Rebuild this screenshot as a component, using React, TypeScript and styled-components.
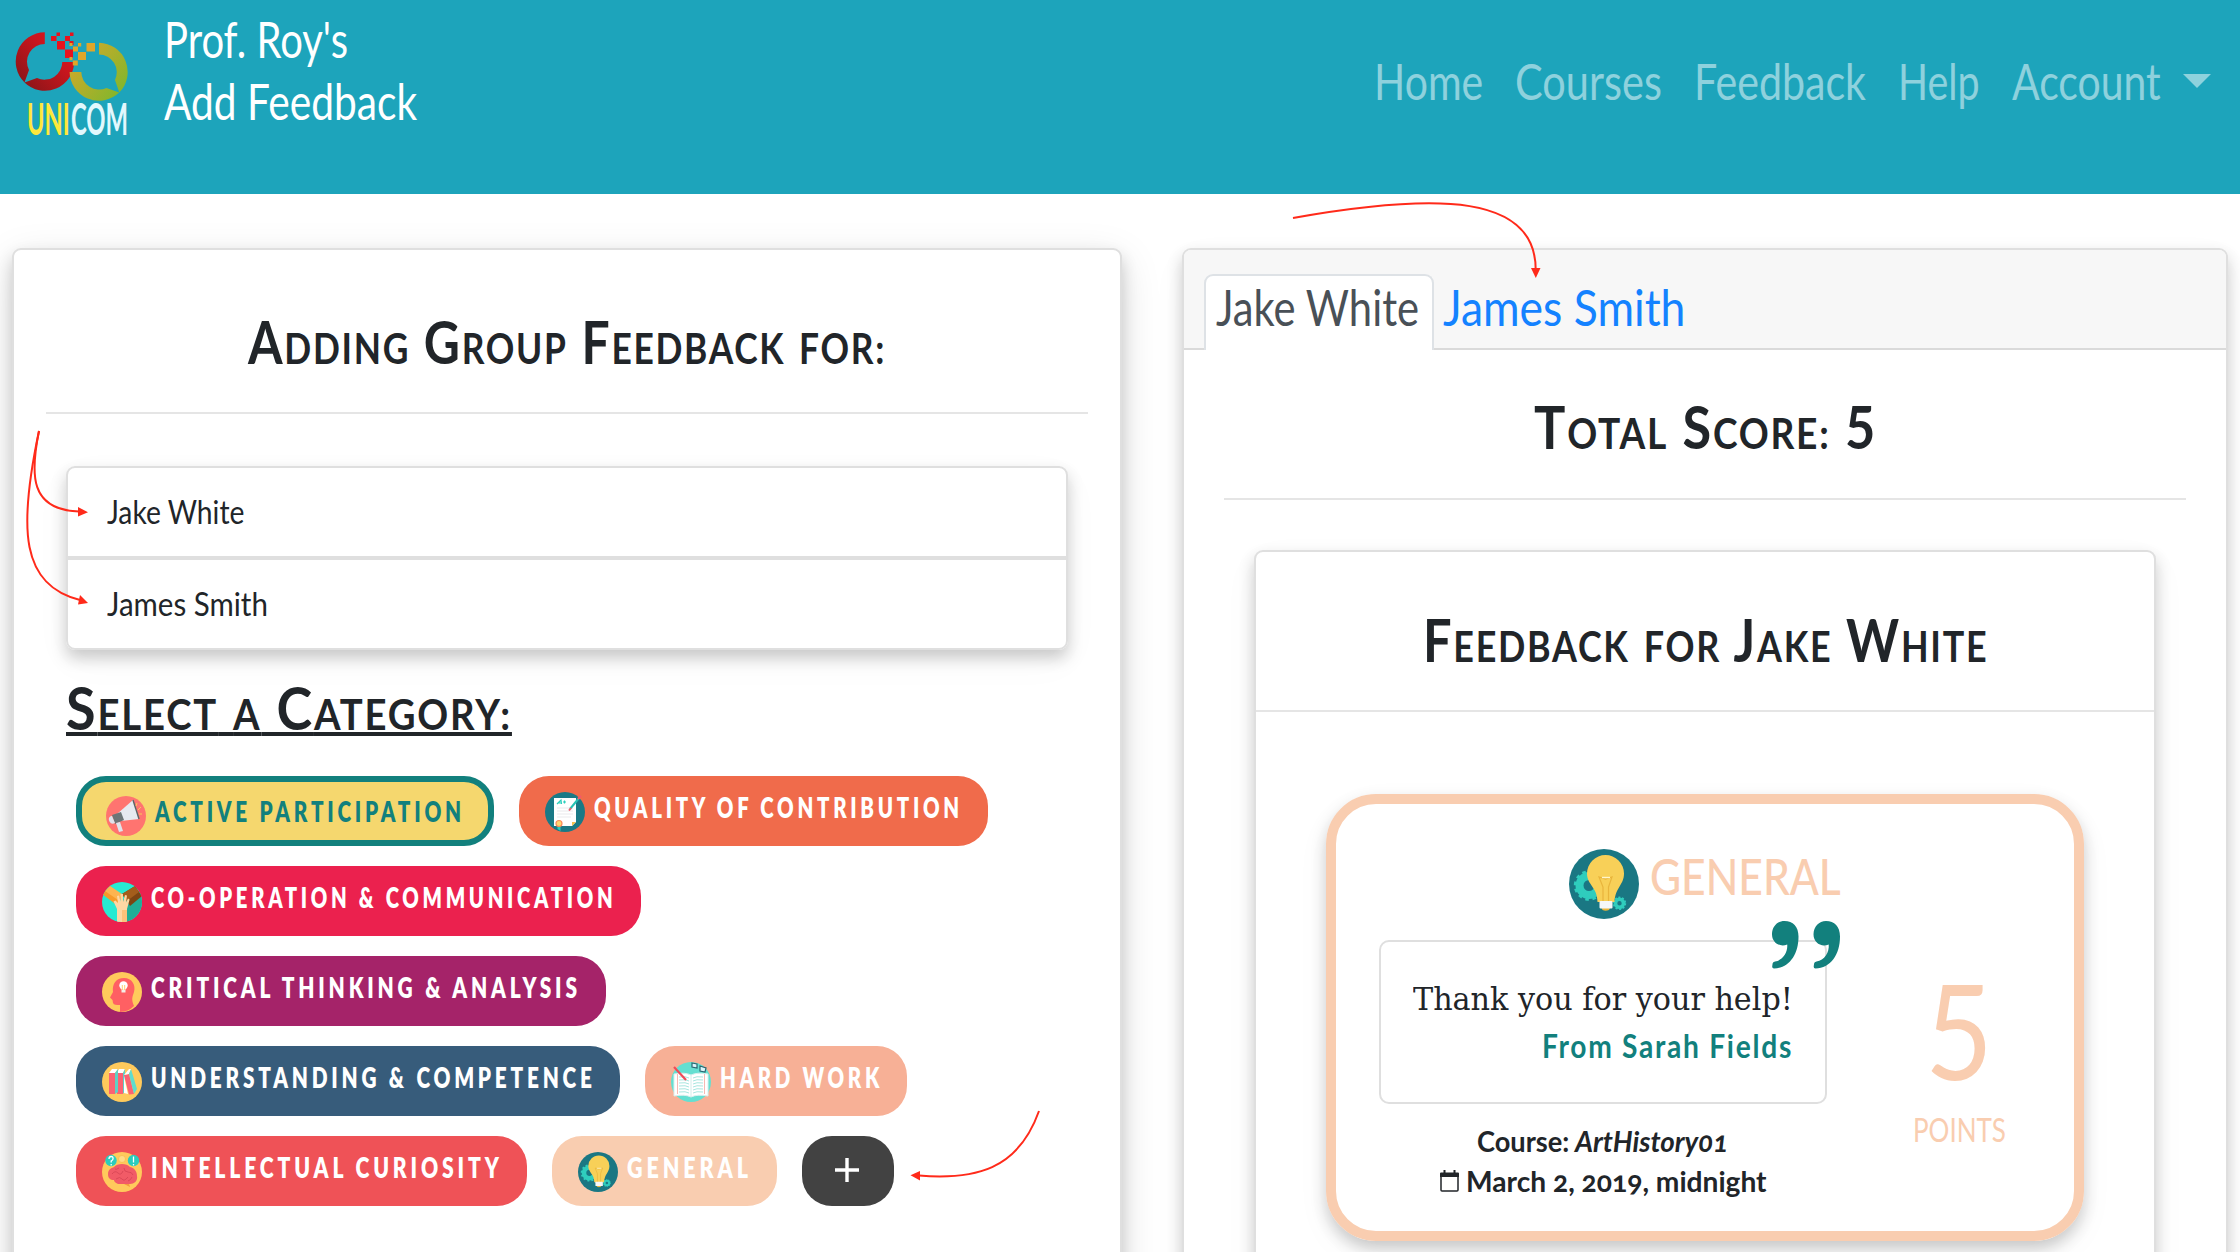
import React, { useLayoutEffect, useRef, useState } from "react";
import styled, { createGlobalStyle, css } from "styled-components";

const GlobalStyle = createGlobalStyle`
  *, *::before, *::after { box-sizing: border-box; }
  html, body { margin: 0; height: 1252px; overflow: hidden; background: #fff; }
  body {
    font-family: Lato, "Open Sans", "Liberation Sans", sans-serif;
    color: #212529;
  }
  svg { flex: none; }
`;

const ink = "#212529";
const teal = "#12807d";
const peach = "#f9cdb0";
const cardShadow = "0 8px 16px rgba(0, 0, 0, 0.2), 0 12px 40px rgba(0, 0, 0, 0.03)";
const deepShadow = "0 8px 16px rgba(0, 0, 0, 0.16), 0 12px 40px rgba(0, 0, 0, 0.13)";

/* Text condensed horizontally so that it fills a given width */
const FitBox = styled.span<{ $w: number }>`
  display: inline-block;
  width: ${(p) => p.$w}px;
  flex: none;
  text-align: left;
  white-space: nowrap;
`;
const FitInner = styled.span`
  display: inline-block;
  transform-origin: 0 50%;
`;

function Fit({ w, children }: { w: number; children: React.ReactNode }) {
  const ref = useRef<HTMLSpanElement>(null);
  const [scale, setScale] = useState(1);
  useLayoutEffect(() => {
    if (ref.current && ref.current.offsetWidth) setScale(w / ref.current.offsetWidth);
  }, [w]);
  return (
    <FitBox $w={w}>
      <FitInner ref={ref} style={{ transform: `scaleX(${scale})` }}>
        {children}
      </FitInner>
    </FitBox>
  );
}

/* Lower-case letters become capitals of a smaller size */
const Small = styled.span`
  font-size: 0.71em;
  line-height: 1;
  text-transform: uppercase;
`;
function SmallCaps({ text }: { text: string }) {
  return (
    <>
      {text.split(/([a-z:]+)/).map((part, i) =>
        /[a-z]/.test(part) ? <Small key={i}>{part}</Small> : part
      )}
    </>
  );
}

const Page = styled.div`
  position: relative;
  width: 2240px;
  height: 1252px;
  overflow: hidden;
`;

const Navbar = styled.header`
  display: flex;
  align-items: flex-start;
  height: 194px;
  padding: 8px 29px 0 14px;
  background: #1da4bb;
`;
const LogoSlot = styled.div`
  display: flex;
  flex-direction: column;
  width: 116px;
  margin: 22px 34px 0 0;
`;
const LogoText = styled.div`
  display: flex;
  gap: 1px;
  margin-top: -3px;
  padding-left: 13px;
  font-size: 43px;
  line-height: 40px;
  font-weight: 700;
  color: #e2f8fd;
  & > :first-child { color: #ffe83b; }
`;
const BrandText = styled.div`
  display: flex;
  flex-direction: column;
  font-size: 50px;
  line-height: 62px;
  color: #fff;
`;
const NavLinks = styled.nav`
  display: flex;
  align-items: flex-start;
  margin: 42px 0 0 auto;
  gap: 32px;
  font-size: 50px;
  line-height: 62px;
  color: rgba(255, 255, 255, 0.5);
`;
const Account = styled.div`
  display: flex;
  gap: 22px;
`;
const Caret = styled.span`
  margin-top: 24px;
  border-top: 14px solid rgba(255, 255, 255, 0.5);
  border-left: 14px solid transparent;
  border-right: 14px solid transparent;
  height: 0;
`;

const Columns = styled.main`
  display: flex;
  align-items: flex-start;
  gap: 60px;
  padding: 54px 12px 0;
`;
const Card = styled.section<{ $w: number; $h: number; $deep?: boolean }>`
  width: ${(p) => p.$w}px;
  height: ${(p) => p.$h}px;
  flex: none;
  background: #fff;
  border: 2px solid #dfdfdf;
  border-radius: 9px;
  box-shadow: ${(p) => (p.$deep ? deepShadow : cardShadow)};
`;
const Title = styled.h2<{ $top: number; $align?: string; $underline?: boolean }>`
  display: flex;
  justify-content: ${(p) => p.$align || "center"};
  height: ${(p) => p.$top + 72}px;
  margin: 0;
  padding-top: ${(p) => p.$top}px;
  font-size: 59px;
  line-height: 72px;
  font-weight: 700;
  letter-spacing: 2px;
  color: ${ink};
  ${(p) =>
    p.$underline &&
    css`
      ${FitInner} {
        text-decoration: underline;
        text-decoration-thickness: 4px;
        text-underline-offset: 2px;
        text-decoration-skip-ink: none;
      }
    `}
`;
const Rule = styled.div<{ $top: number; $side: number }>`
  height: 2px;
  margin: ${(p) => p.$top}px ${(p) => p.$side}px 0;
  background: #e5e5e5;
`;
const Students = styled.ul`
  list-style: none;
  width: 1002px;
  margin: 52px 0 0 52px;
  padding: 0;
  border-radius: 9px;
  box-shadow: ${cardShadow};
`;
const Student = styled.li`
  display: flex;
  align-items: center;
  height: 92px;
  padding: 0 0 2px 39px;
  border: 2px solid #dfdfdf;
  background: #fff;
  font-size: 33px;
  &:first-child { border-radius: 9px 9px 0 0; }
  &:last-child { border-radius: 0 0 9px 9px; }
`;
const CategoryTitle = styled.div`
  margin: 0 0 0 52px;
`;
const Badges = styled.div`
  display: flex;
  flex-wrap: wrap;
  gap: 20px 25px;
  width: 1000px;
  margin: 32px 0 0 62px;
`;
const Badge = styled.div<{ $bg: string; $w: number; $active?: boolean }>`
  display: flex;
  align-items: flex-start;
  gap: 9px;
  width: ${(p) => p.$w}px;
  height: 70px;
  padding: ${(p) => (p.$active ? "14px 24px" : "16px 26px")};
  border-radius: 30px;
  background: ${(p) => p.$bg};
  color: ${(p) => (p.$active ? teal : "#fff")};
  ${(p) => p.$active && `border: 6px solid ${teal};`}
  font-size: 27.5px;
  line-height: 31px;
  font-weight: 800;
  letter-spacing: 5px;
`;
const PlusButton = styled.button`
  display: flex;
  align-items: center;
  justify-content: center;
  width: 92px;
  height: 70px;
  padding: 0 2px 2px 0;
  border: 0;
  border-radius: 30px;
  background: #424242;
`;

const TabBar = styled.div`
  display: flex;
  align-items: flex-end;
  height: 100px;
  padding-left: 20px;
  background: #f7f7f7;
  border-bottom: 2px solid #dadada;
  border-radius: 7px 7px 0 0;
  font-size: 50px;
  line-height: 62px;
`;
const Tab = styled.div<{ $active?: boolean }>`
  height: 76px;
  padding: 0 14px 0 7px;
  margin-bottom: -2px;
  border: 2px solid transparent;
  border-bottom: 0;
  color: #1482ff;
  ${(p) =>
    p.$active &&
    css`
      padding: 0 13px 0 10px;
      background: #fff;
      border-color: #dee2e6;
      border-radius: 9px 9px 0 0;
      color: #495057;
    `}
`;
const InnerWrap = styled.div`
  padding: 50px 0 0 70px;
`;
const InnerBody = styled.div`
  padding: 82px 0 0 70px;
`;
const Feedback = styled.article`
  display: flex;
  width: 758px;
  height: 447px;
  border: 10px solid ${peach};
  border-radius: 50px;
  box-shadow: ${cardShadow};
`;
const FeedbackMain = styled.div`
  width: 448px;
  margin-left: 43px;
`;
const FeedbackHead = styled.div`
  display: flex;
  align-items: flex-start;
  gap: 11px;
  height: 136px;
  padding: 45px 0 0 190px;
  font-size: 50px;
  line-height: 54px;
  font-weight: 500;
  color: ${peach};
`;
const QuoteBox = styled.blockquote`
  position: relative;
  display: flex;
  flex-direction: column;
  align-items: flex-end;
  width: 448px;
  height: 164px;
  margin: 0;
  padding: 34px 32px 0 0;
  border: 2px solid #dfdfdf;
  border-radius: 10px;
`;
const QuoteMark = styled.svg`
  position: absolute;
  top: -21px;
  right: -15px;
`;
const QuoteText = styled.div`
  font-family: "DejaVu Serif", "Liberation Serif", serif;
  font-size: 31px;
  line-height: 46px;
`;
const QuoteFrom = styled.div`
  font-size: 33px;
  line-height: 46px;
  font-weight: 700;
  letter-spacing: 2px;
  color: ${teal};
`;
const MetaLines = styled.div`
  padding-top: 17px;
  font-size: 29px;
  line-height: 40px;
  font-weight: 700;
  font-variant-numeric: oldstyle-nums;
`;
const MetaLine = styled.div<{ $left: number; $gap: number }>`
  display: flex;
  gap: ${(p) => p.$gap}px;
  padding-left: ${(p) => p.$left}px;
`;
const CalendarIcon = styled.svg`
  margin-top: 9px;
`;
const Points = styled.div`
  display: flex;
  flex-direction: column;
  align-items: center;
  width: 140px;
  margin-left: 62px;
  padding-top: 163px;
  color: ${peach};
`;
const PointsValue = styled.div`
  font-size: 131px;
  line-height: 126px;
  font-weight: 400;
`;
const PointsLabel = styled.div`
  margin-top: 16px;
  font-size: 33px;
  line-height: 40px;
`;
const Annotations = styled.svg`
  position: absolute;
  left: 0;
  top: 0;
  pointer-events: none;
`;

function Logo() {
  return (
    <svg width="116" height="72" viewBox="14 30 116 72">
      <defs>
        <linearGradient id="lr" x1="0" y1="1" x2="1" y2="0">
          <stop offset="0" stopColor="#7d1518" />
          <stop offset="0.6" stopColor="#c8161d" />
          <stop offset="1" stopColor="#e8131d" />
        </linearGradient>
        <linearGradient id="lg" x1="0" y1="0" x2="1" y2="0.8">
          <stop offset="0" stopColor="#e0a62a" />
          <stop offset="1" stopColor="#7fb72c" />
        </linearGradient>
      </defs>
      <path
        fill="url(#lr)"
        d="M44.8 32.3A29.3 29.3 0 0 0 24.500 82.500L29 70A17.8 17.8 0 0 1 44.8 44ZM24.500 82.500A29.3 29.3 0 0 0 74.200 62H62.300A17.8 17.8 0 0 1 37 78Z"
      />
      <path
        fill="url(#lg)"
        d="M99 42.700A29.3 29.3 0 0 1 119.300 92.500L115 80A17.8 17.8 0 0 0 99 54.500ZM119.200 92.600A29.3 29.3 0 0 1 69.600 72H81.300A17.8 17.8 0 0 0 106.500 88Z"
      />
      <path
        fill="#e8131d"
        d="M51 36h5.500v5h-5.500zM56.500 32.500h3.500v3.500h-3.500zM57 41h8v8.500h-8zM65 36h5v5h-5zM70 32.500h3.500v3.500h-3.500zM69.500 41h4v4h-4zM65 49.500h8v8.500h-8z"
      />
      <path
        fill="#e0a62a"
        d="M73 46.500h5v5h-5zM78 43h3.200v3.500h-3.200zM86.500 43h8.500v8.500h-8.500zM78 52h8v8h-8zM72.800 60.500h5v5h-5zM69.500 57h3v3.200h-3zM69.500 43h3v3h-3z"
      />
    </svg>
  );
}

const MegaphoneIcon = () => (
  <svg width="40" height="40" viewBox="0 0 40 40">
    <circle cx="20" cy="20" r="20" fill="#ff7470" />
    <path d="M27 4L33 23L15 25L11 18Z" fill="#e6e9f0" />
    <path d="M27 4l6 19" stroke="#5b6467" strokeWidth="1.400" />
    <path d="M6 19l9-3 3 8-9 4z" fill="#6d7577" />
    <path d="M5 20a3 3 0 0 0 4 7l-3-7zM10 27l4-1 3 9-4 1z" fill="#dfe3eb" />
    <path d="M30 10l1-3M32 14l3-3M33 18h3" stroke="#f7c85b" strokeWidth="1" />
  </svg>
);
const PaperIcon = () => (
  <svg width="40" height="40" viewBox="0 0 40 40">
    <circle cx="20" cy="20" r="20" fill="#1a7986" />
    <path d="M9 6h22v24l-4 4H9z" fill="#fff" />
    <path d="M12 12l4-4 .500 4M12.500 11h4M18 10h3M19.500 8.500v3" stroke="#2bcfbd" strokeWidth="1.200" fill="none" />
    <path d="M12 16h16M12 19h16M12 22h16M12 25h14" stroke="#e9e9ec" strokeWidth="1" />
    <path d="M25 17L34 6" stroke="#27c2b4" strokeWidth="2" />
    <path d="M33 7l3-3M24 18.500l2-2.500" stroke="#f4586b" strokeWidth="2" />
    <path d="M27 30h4l-4 4z" fill="#f7c14e" />
    <path d="M12.500 34h3v5l-3-2z" fill="#2bcfbd" />
    <circle cx="14" cy="31.500" r="3" fill="#ffd66e" stroke="#fa8a5c" strokeWidth="1.200" />
  </svg>
);
const HandsIcon = () => (
  <svg width="40" height="40" viewBox="0 0 40 40">
    <clipPath id="hc"><circle cx="20" cy="20" r="20" /></clipPath>
    <g clipPath="url(#hc)">
      <rect width="40" height="40" fill="#27ead2" />
      <path d="M20 18L40 8V40H20z" fill="#1fae97" />
      <path d="M0 12L8 4L20 13L16 24Z" fill="#f79a2a" />
      <path d="M8 4L3 9L16 18L20 12Z" fill="#fdb450" />
      <path d="M40 14L33 4L20 12L28 24Z" fill="#7c4412" />
      <path d="M33 4l4 6-12 9-5-7z" fill="#a35d1b" />
      <path d="M15 40V27L11.500 19.500l2-1L16 21l-1-7 2-.5 1.500 6V12h2.500v8l2-7 2 .5-1 7 2-4 1.600 1L25 27V40z" fill="#fdd7a4" />
      <path d="M20 28h5V40h-5z" fill="#fcc27a" />
    </g>
  </svg>
);
const HeadIcon = () => (
  <svg width="40" height="40" viewBox="0 0 40 40">
    <circle cx="20" cy="20" r="20" fill="#ffca5c" />
    <path d="M18 39.900V33c-4 0-6 0-7-2l-.5-3-2.500-2.500L11 20C10 12 14 6 22 6s12 7 10 14c-1.500 5-3 7 0 14a20 20 0 0 1-14 5.900z" fill="#ff6063" />
    <circle cx="21.500" cy="13.500" r="4.200" fill="#fff" />
    <path d="M19.500 17h4v3.500h-4z" fill="#f4eee6" />
    <path d="M20.300 13v5M22.700 13v5" stroke="#ffc34c" strokeWidth=".8" />
  </svg>
);
const BooksIcon = () => (
  <svg width="40" height="40" viewBox="0 0 40 40">
    <circle cx="20" cy="20" r="20" fill="#ffca5c" />
    <path d="M7 11L10 7H16L13 11ZM15 11L17 7H23L21 11Z" fill="#fff" />
    <path d="M7 11h6v21H7zM15 11h6v21h-6z" fill="#fb6373" />
    <path d="M13 11l3-4v23l-3 2zM21 11l2-4v22l-2 3z" fill="#5fd0c5" />
    <path d="M22 13l5-1 5 20-5 .5z" fill="#fb6373" />
    <path d="M22 13l5-6 2 0-2 5z" fill="#fff" />
    <path d="M27 12l2-5 6 20-3 5z" fill="#5fdccf" />
    <path d="M22 14v17l4 1z" fill="#fff" />
  </svg>
);
const OpenBookIcon = () => (
  <svg width="40" height="40" viewBox="0 0 40 40">
    <circle cx="20" cy="20" r="20" fill="#64dfd1" />
    <path d="M3 12q11-2 17 1 6-3 17-1v22q-11-2-17 1-6-3-17-1z" fill="#fff" stroke="#d9efee" />
    <path d="M8 15q7-1 10 1M8 18q7-1 10 1M8 21q7-1 10 1M8 24q7-1 10 1M8 27q7-1 10 1M8 30q7-1 10 1M22 16q3-2 10-1M22 19q3-2 10-1M22 22q3-2 10-1M22 25q3-2 10-1M22 28q3-2 10-1M22 31q3-2 10-1" stroke="#a8e6df" fill="none" />
    <path d="M20 13v22" stroke="#d4ecea" />
    <path d="M6.500 12v20M33.500 12v20" stroke="#f6a7a0" strokeWidth=".8" />
    <path d="M3 5L15 18" stroke="#f04b58" strokeWidth="2.200" />
    <path d="M21 1l5 1 0 4-5-1zM29 4l6 2-1 4-5-1z" fill="#d9f5fa" stroke="#2a6671" strokeWidth="1.200" />
  </svg>
);
const BrainIcon = () => (
  <svg width="40" height="40" viewBox="0 0 40 40">
    <circle cx="20" cy="20" r="20" fill="#ffca5c" />
    <path d="M6 22c0-5 4-6 6-7 3-4 13-4 16 0 5 1 7 5 7 9 1 5-3 8-7 8H16c-3-1-4-3-4-4-4 0-6-2-6-6z" fill="#f15b67" />
    <path d="M10 22q3-4 6-1t5-2M14 27q4-3 6 0t6-2M22 16q0 4 4 4t5 3M17 16q-3 2-4 1M26 29q3-1 4-4" stroke="#d84656" fill="none" strokeWidth=".9" />
    <path d="M22 32l6 3-1-3z" fill="#f49a3d" />
    <circle cx="20" cy="7" r="3.500" fill="#ffdc86" stroke="#f5b544" strokeWidth=".6" />
    <circle cx="9" cy="8.500" r="5.700" fill="#2bcdbd" />
    <circle cx="31.500" cy="8.500" r="5.700" fill="#2bcdbd" />
    <path d="M7 7q0-2.500 2.200-2.500T11 7q0 1-1.800 2v1.500M9.200 12v1.400M31.500 4.500v6M31.500 12v1.400" stroke="#fff" strokeWidth="1.300" fill="none" />
  </svg>
);
const BulbIcon = ({ size = 40 }: { size?: number }) => (
  <svg width={size} height={size} viewBox="0 0 70 70">
    <circle cx="35" cy="35" r="35" fill="#1a7783" />
    <circle cx="20" cy="36.500" r="9.500" fill="none" stroke="#2fcdbd" strokeWidth="8" />
    <circle cx="20" cy="36.500" r="13.500" fill="none" stroke="#2fcdbd" strokeWidth="3.400" strokeDasharray="3.500 3.570" />
    <circle cx="50.500" cy="54.300" r="4" fill="none" stroke="#2fcdbd" strokeWidth="3.600" />
    <circle cx="50.500" cy="54.300" r="5.800" fill="none" stroke="#2fcdbd" strokeWidth="1.800" strokeDasharray="2 1.640" />
    <path d="M28.500 53C28.500 38 18 36 18 24.500a18.500 18.500 0 0 1 37 0C55 36 46.500 38 45.500 53z" fill="#f8d058" />
    <path d="M34 52.500V38L30 28l6.500 2 6.500-2-3.500 10v14.500" fill="none" stroke="#e9b53c" strokeWidth="1.200" />
    <path d="M33 28.500h8" stroke="#fff6cc" strokeWidth="1.400" />
    <path d="M32 58h9.500l-1.500 3q-3.500 1.500-6.500 0z" fill="#e9b53c" />
    <rect x="30.500" y="52" width="13" height="7.500" rx="1" fill="#f6f7f8" />
  </svg>
);

type Category = {
  label: string;
  bg: string;
  width: number;
  textWidth: number;
  icon: React.ReactNode;
  active?: boolean;
};
const categories: Category[] = [
  { label: "ACTIVE PARTICIPATION", bg: "#f5d76e", width: 418, textWidth: 310, icon: <MegaphoneIcon />, active: true },
  { label: "QUALITY OF CONTRIBUTION", bg: "#f06b4b", width: 469, textWidth: 369, icon: <PaperIcon /> },
  { label: "CO-OPERATION & COMMUNICATION", bg: "#eb214e", width: 565, textWidth: 465, icon: <HandsIcon /> },
  { label: "CRITICAL THINKING & ANALYSIS", bg: "#a52369", width: 530, textWidth: 430, icon: <HeadIcon /> },
  { label: "UNDERSTANDING & COMPETENCE", bg: "#375c7b", width: 544, textWidth: 445, icon: <BooksIcon /> },
  { label: "HARD WORK", bg: "#f7b096", width: 262, textWidth: 163, icon: <OpenBookIcon /> },
  { label: "INTELLECTUAL CURIOSITY", bg: "#ef5257", width: 451, textWidth: 352, icon: <BrainIcon /> },
  { label: "GENERAL", bg: "#f9cdb0", width: 225, textWidth: 125, icon: <BulbIcon /> },
];

const links = [
  { label: "Home", w: 109 },
  { label: "Courses", w: 147 },
  { label: "Feedback", w: 172 },
  { label: "Help", w: 82 },
];

export default function App() {
  return (
    <Page>
      <GlobalStyle />
      <Navbar>
        <LogoSlot>
          <Logo />
          <LogoText>
            <Fit w={43}>UNI</Fit>
            <Fit w={57}>COM</Fit>
          </LogoText>
        </LogoSlot>
        <BrandText>
          <Fit w={184}>Prof. Roy's</Fit>
          <Fit w={253}>Add Feedback</Fit>
        </BrandText>
        <NavLinks>
          {links.map((l) => (
            <Fit key={l.label} w={l.w}>{l.label}</Fit>
          ))}
          <Account>
            <Fit w={149}>Account</Fit>
            <Caret />
          </Account>
        </NavLinks>
      </Navbar>

      <Columns>
        <Card $w={1110} $h={1100} $deep>
          <Title $top={56}><Fit w={638}><SmallCaps text="Adding Group Feedback for:" /></Fit></Title>
          <Rule $top={34} $side={32} />
          <Students>
            <Student><Fit w={137}>Jake White</Fit></Student>
            <Student><Fit w={161}>James Smith</Fit></Student>
          </Students>
          <CategoryTitle>
            <Title $top={22} $align="flex-start" $underline>
              <Fit w={446}><SmallCaps text="Select a Category:" /></Fit>
            </Title>
          </CategoryTitle>
          <Badges>
            {categories.map((c) => (
              <Badge key={c.label} $bg={c.bg} $w={c.width} $active={c.active}>
                {c.icon}
                <Fit w={c.textWidth}>{c.label}</Fit>
              </Badge>
            ))}
            <PlusButton aria-label="Add category">
              <svg width="24" height="24" viewBox="0 0 24 24">
                <path d="M12 0v24M0 12h24" stroke="#fff" strokeWidth="3.400" />
              </svg>
            </PlusButton>
          </Badges>
        </Card>

        <Card $w={1046} $h={1100}>
          <TabBar>
            <Tab $active><Fit w={203}>Jake White</Fit></Tab>
            <Tab><Fit w={242}>James Smith</Fit></Tab>
          </TabBar>
          <Title $top={41}><Fit w={343}><SmallCaps text="Total Score: 5" /></Fit></Title>
          <Rule $top={35} $side={40} />
          <InnerWrap>
            <Card $w={902} $h={800}>
              <Title $top={52}><Fit w={565}><SmallCaps text="Feedback for Jake White" /></Fit></Title>
              <Rule $top={34} $side={0} />
              <InnerBody>
                <Feedback>
                  <FeedbackMain>
                    <FeedbackHead>
                      <BulbIcon size={70} />
                      <Fit w={191}>GENERAL</Fit>
                    </FeedbackHead>
                    <QuoteBox>
                      <QuoteText><Fit w={380}>Thank you for your help!</Fit></QuoteText>
                      <QuoteFrom><Fit w={251}>From Sarah Fields</Fit></QuoteFrom>
                      <QuoteMark width="68" height="48" viewBox="0 0 68 48">
                        <path
                          id="q"
                          fill={teal}
                          d="M12.500 0C21 0 26.500 5.500 26.500 15.500 26.500 34 17 47 2 47.500Q0 47.500 .2 45.500L.6 42.500Q.8 40.800 3 40.500C11 39.500 16 31 15.200 23.500 7.500 26.500 0 21.500 0 13.200 0 5.500 5.500 0 12.500 0Z"
                        />
                        <use href="#q" x="41.500" />
                      </QuoteMark>
                    </QuoteBox>
                    <MetaLines>
                      <MetaLine $left={98} $gap={6}>
                        <Fit w={92}>Course:</Fit>
                        <em><Fit w={153}>ArtHistory01</Fit></em>
                      </MetaLine>
                      <MetaLine $left={61} $gap={7}>
                        <CalendarIcon width="19" height="22" viewBox="0 0 19 22">
                          <path d="M1 4.500h17V20q0 1-1 1H2q-1 0-1-1z" fill="none" stroke={ink} strokeWidth="1.500" />
                          <path d="M1 2.500h2.500V0h2v2.500h8V0h2v2.500H18q1 0 1 1V7H0V3.500q0-1 1-1z" fill={ink} />
                        </CalendarIcon>
                        <Fit w={301}>March 2, 2019, midnight</Fit>
                      </MetaLine>
                    </MetaLines>
                  </FeedbackMain>
                  <Points>
                    <PointsValue><Fit w={68}>5</Fit></PointsValue>
                    <PointsLabel><Fit w={93}>POINTS</Fit></PointsLabel>
                  </Points>
                </Feedback>
              </InnerBody>
            </Card>
          </InnerWrap>
        </Card>
      </Columns>

      <Annotations width="2240" height="1252" viewBox="0 0 2240 1252">
        <g fill="none" stroke="#ff2a1a" strokeWidth="2">
          <path d="M1293 218C1440 192 1536 195 1535.700 270" />
          <path d="M39 431C30 475 30 510 79 511.500" />
          <path d="M39 431C18 530 21 585 80 600" />
          <path d="M1039 1111C1018 1170 975 1180 919 1175.500" />
        </g>
        <g fill="#ff2a1a">
          <path d="M1531 268h9.500l-4.700 10z" />
          <path d="M78 507v9.500l10-4.200z" />
          <path d="M80 595l-2 9.500 10-1.500z" />
          <path d="M920 1171v9.500l-9.500-5.200z" />
        </g>
      </Annotations>
    </Page>
  );
}
